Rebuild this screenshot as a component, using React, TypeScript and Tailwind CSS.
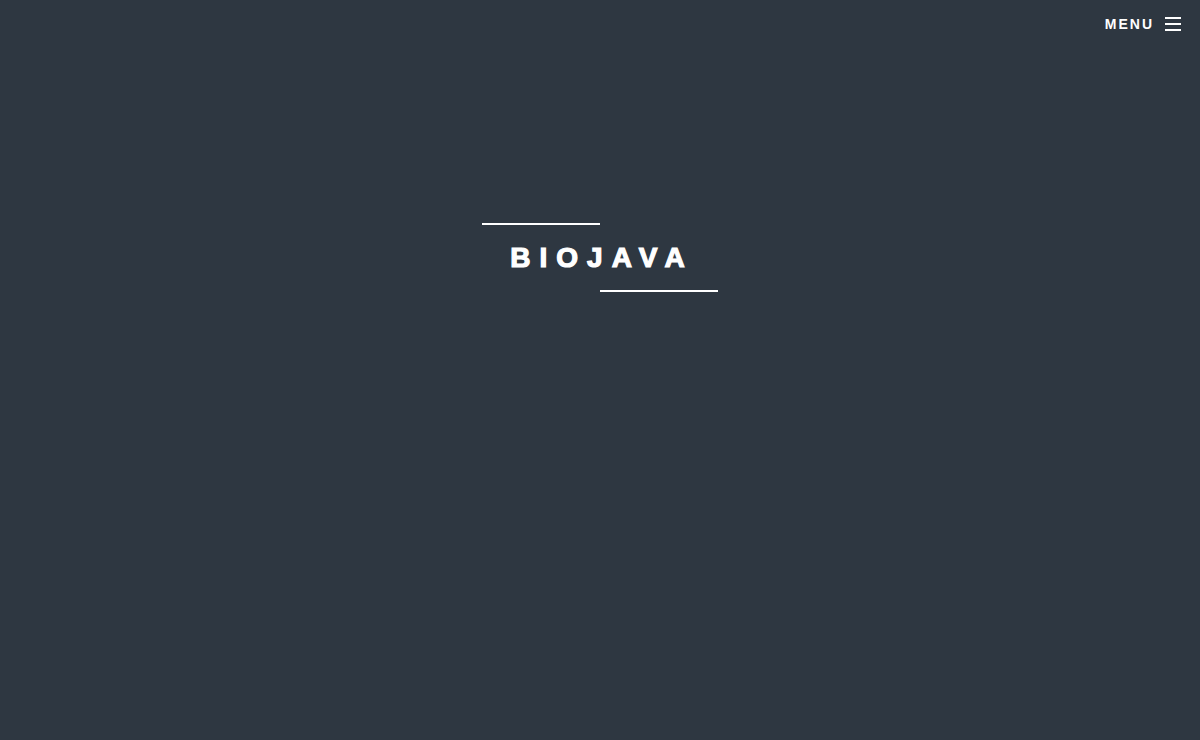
export default function App() {
  return (
    <div
      className="min-h-screen h-[740px] bg-[#2e3741] flex flex-col"
      style={{ fontFamily: '"Liberation Sans", Arial, sans-serif' }}
    >
      {/* Header */}
      <header className="flex justify-end items-center h-12 pr-[19px]">
        <button className="flex items-center gap-[11px] text-white">
          <span className="text-[14px] font-bold tracking-[2px] leading-none">MENU</span>
          <svg className="w-4 h-4" viewBox="0 0 16 16" fill="none" stroke="currentColor" strokeWidth={2}>
            <path d="M0 2h16M0 8h16M0 14h16" />
          </svg>
        </button>
      </header>

      {/* Title */}
      <main className="flex justify-center pt-[175px]">
        <div className="w-[236px] flex flex-col">
          <div className="w-[118px] h-[2px] bg-white" />
          <h1 className="text-center text-white text-[28px] font-black tracking-[9px] pl-[4px] leading-none mt-[19px] mb-[18px] [-webkit-text-stroke:1.2px_white]">
            BIOJAVA
          </h1>
          <div className="w-[118px] h-[2px] bg-white self-end" />
        </div>
      </main>
    </div>
  );
}
